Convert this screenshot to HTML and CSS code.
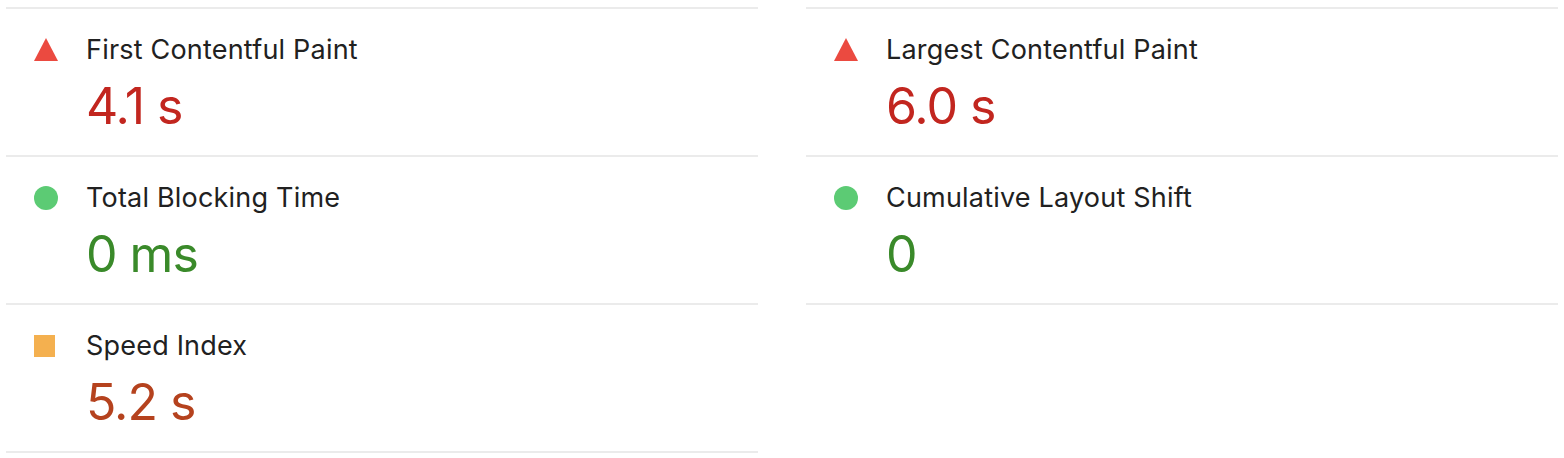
FILE: index.html
```html
<!DOCTYPE html>
<html lang="en">
<head>
    <meta charset="UTF-8">
    <title>Metrics</title>
    <link rel="stylesheet" href="styles.css">
</head>
<body>
    <div class="metrics">
        <div class="metric fail">
            <span class="icon">
                <svg width="24" height="23" viewBox="0 0 24 23"><polygon points="12,0 24,23 0,23" /></svg>
            </span>
            <div class="title">First Contentful Paint</div>
            <div class="value">4.1&nbsp;s</div>
        </div>
        <div class="metric fail">
            <span class="icon">
                <svg width="24" height="23" viewBox="0 0 24 23"><polygon points="12,0 24,23 0,23" /></svg>
            </span>
            <div class="title">Largest Contentful Paint</div>
            <div class="value">6.0&nbsp;s</div>
        </div>
        <div class="metric pass">
            <span class="icon"></span>
            <div class="title">Total Blocking Time</div>
            <div class="value">0&nbsp;ms</div>
        </div>
        <div class="metric pass">
            <span class="icon"></span>
            <div class="title">Cumulative Layout Shift</div>
            <div class="value">0</div>
        </div>
        <div class="metric average">
            <span class="icon"></span>
            <div class="title">Speed Index</div>
            <div class="value">5.2&nbsp;s</div>
        </div>
    </div>
</body>
</html>
```

FILE: styles.css
```css
body {
    margin: 0;
    background-color: #ffffff;
    font-family: Inter, "Noto Sans", sans-serif;
    color: #212121;
}

.metrics {
    display: grid;
    grid-template-columns: 1fr 1fr;
    column-gap: 48px;
    margin: 7px 6px 0 6px;
}

.metric {
    display: grid;
    grid-template-columns: 24px 1fr;
    column-gap: 28px;
    row-gap: 8px;
    align-items: center;
    padding: 23px 0 19px 28px;
    border-bottom: 2px solid #ebebeb;
}

.metric:nth-child(1),
.metric:nth-child(2) {
    border-top: 2px solid #ebebeb;
}

.icon {
    display: block;
    width: 24px;
    height: 24px;
}

.icon svg {
    display: block;
}

.fail .icon svg polygon {
    fill: #eb4a40;
}

.pass .icon {
    border-radius: 50%;
    background-color: #5ccb74;
}

.average .icon {
    width: 21px;
    height: 22px;
    background-color: #f4b04f;
}

.title {
    font-size: 27px;
    line-height: 36px;
    letter-spacing: 0.2px;
}

.value {
    grid-column: 2;
    font-size: 50px;
    line-height: 60px;
    letter-spacing: -1px;
}

.fail .value {
    color: #c2261f;
}

.pass .value {
    color: #3a8a2a;
}

.average .value {
    color: #b5421e;
}
```
